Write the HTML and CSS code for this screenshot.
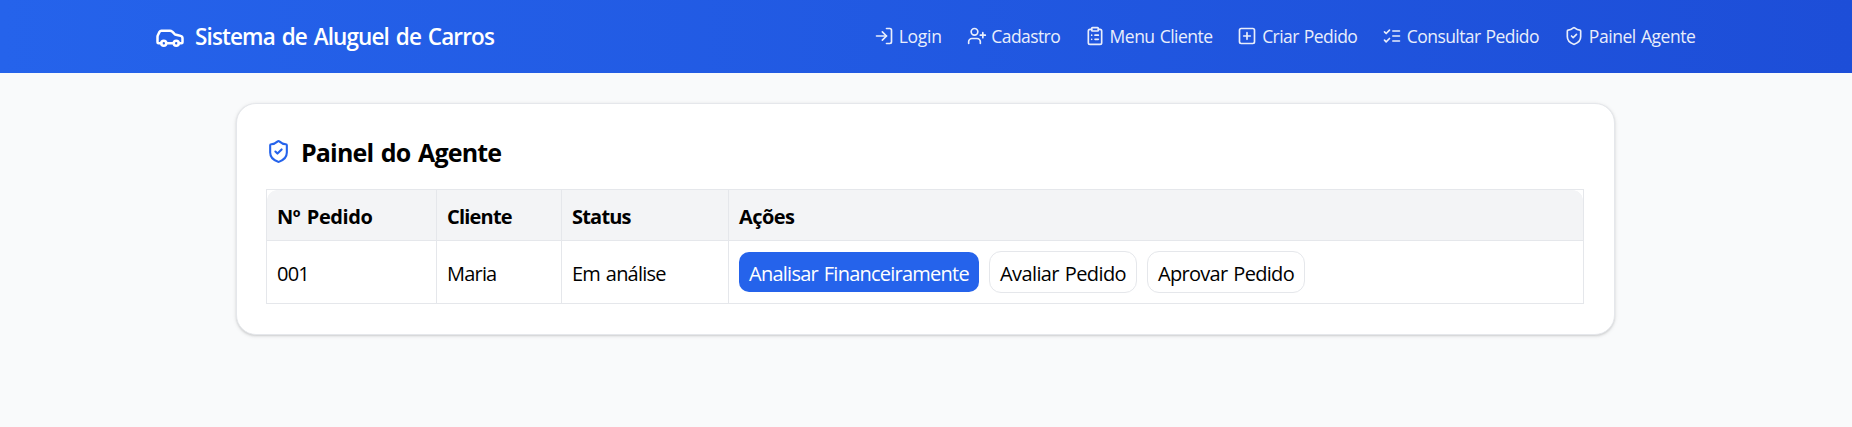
FILE: index.html
```html
<!DOCTYPE html>
<html lang="pt-BR">
<head>
<meta charset="utf-8">
<title>Sistema de Aluguel de Carros</title>
<link rel="stylesheet" href="styles.css">
</head>
<body>
<svg width="0" height="0" class="defs">
  <symbol id="shield" viewBox="0 0 24 24"><path d="M20 13c0 5-3.500 7.500-7.660 8.950a1 1 0 0 1-.67-.01C7.500 20.500 4 18 4 13V6a1 1 0 0 1 1-1c2 0 4.500-1.200 6.240-2.720a1.170 1.170 0 0 1 1.520 0C14.510 3.810 17 5 19 5a1 1 0 0 1 1 1z"/><path d="m9 12 2 2 4-4"/></symbol>
</svg>
<header class="topbar">
  <div class="brand">
    <svg class="icon icon-car" viewBox="0 0 24 24"><path d="M19 17h2c.6 0 1-.4 1-1v-3c0-.9-.7-1.700-1.500-1.900C18.700 10.600 16 10 16 10s-1.300-1.400-2.200-2.300c-.5-.4-1.100-.7-1.800-.7H5c-.6 0-1.100.4-1.400.9l-1.400 2.900A3.700 3.700 0 0 0 2 12v4c0 .6.4 1 1 1h2"/><circle cx="7" cy="17" r="2"/><path d="M9 17h6"/><circle cx="17" cy="17" r="2"/></svg>
    <span class="brand-name">Sistema de Aluguel de Carros</span>
  </div>
  <nav class="nav">
    <a class="link login"><svg class="icon" viewBox="0 0 24 24"><path d="M15 3h4a2 2 0 0 1 2 2v14a2 2 0 0 1-2 2h-4"/><path d="m10 17 5-5-5-5"/><path d="M15 12H3"/></svg><span>Login</span></a>
    <a class="link cadastro"><svg class="icon" viewBox="0 0 24 24"><path d="M16 21v-2a4 4 0 0 0-4-4H6a4 4 0 0 0-4 4v2"/><circle cx="9" cy="7" r="4"/><path d="M19 8v6M22 11h-6"/></svg><span>Cadastro</span></a>
    <a class="link menu"><svg class="icon" viewBox="0 0 24 24"><rect x="8" y="2" width="8" height="4" rx="1"/><path d="M16 4h2a2 2 0 0 1 2 2v14a2 2 0 0 1-2 2H6a2 2 0 0 1-2-2V6a2 2 0 0 1 2-2h2"/><path d="M12 11h4M12 16h4M8 11h.01M8 16h.01"/></svg><span>Menu Cliente</span></a>
    <a class="link criar"><svg class="icon" viewBox="0 0 24 24"><rect x="3" y="3" width="18" height="18" rx="2"/><path d="M8 12h8M12 8v8"/></svg><span>Criar Pedido</span></a>
    <a class="link consultar"><svg class="icon" viewBox="0 0 24 24"><path d="m3 17 2 2 4-4"/><path d="m3 7 2 2 4-4"/><path d="M13 6h8M13 12h8M13 18h8"/></svg><span>Consultar Pedido</span></a>
    <a class="link painel"><svg class="icon"><use href="#shield"/></svg><span>Painel Agente</span></a>
  </nav>
</header>
<main class="card">
  <h1 class="heading"><svg class="icon icon-heading"><use href="#shield"/></svg><span>Painel do Agente</span></h1>
  <table class="orders">
    <colgroup><col class="c-num"><col class="c-client"><col class="c-status"><col></colgroup>
    <thead>
      <tr><th class="h-num">Nº Pedido</th><th class="h-client">Cliente</th><th class="h-status">Status</th><th class="h-actions">Ações</th></tr>
    </thead>
    <tbody>
      <tr><td>001</td><td>Maria</td><td>Em análise</td><td class="cell-actions"><div class="actions"><button class="btn primary">Analisar Financeiramente</button><button class="btn evaluate">Avaliar Pedido</button><button class="btn approve">Aprovar Pedido</button></div></td></tr>
    </tbody>
  </table>
</main>
</body>
</html>
```
FILE: styles.css
```css
* { box-sizing: border-box; }
body {
  margin: 0;
  min-height: 427px;
  background: #f9fafb;
  color: #000;
  font: 20px/30px "Open Sans", "Noto Sans", sans-serif;
}
.defs { display: block; }
.icon {
  width: 20px;
  height: 20px;
  flex: none;
  fill: none;
  stroke: currentColor;
  stroke-width: 2;
  stroke-linecap: round;
  stroke-linejoin: round;
}
.topbar {
  display: flex;
  align-items: center;
  justify-content: space-between;
  height: 73px;
  padding: 0 156.5px 0 155px;
  background: linear-gradient(to right, #2563eb, #1d4ed8);
  color: #fff;
}
.brand { display: flex; align-items: center; gap: 10px; white-space: nowrap; }
.icon-car { width: 30px; height: 30px; }
.brand-name { font-size: 22.5px; font-weight: 600; letter-spacing: -0.87px; word-spacing: 1.8px; }
.nav { display: flex; gap: 25px; font-size: 17.5px; line-height: 25px; }
.nav .icon { margin-top: -1px; }
.link { display: flex; align-items: center; gap: 4.7px; white-space: nowrap; opacity: 0.9; }
.link span { display: block; word-spacing: 1px; }
.login span { width: 42.9px; letter-spacing: -0.25px; }
.cadastro span { width: 68.6px; letter-spacing: -0.57px; }
.menu span { width: 102.9px; letter-spacing: -0.5px; }
.criar span { width: 95px; letter-spacing: -0.55px; }
.consultar span { width: 132.3px; letter-spacing: -0.57px; }
.painel span { width: 106.7px; letter-spacing: -0.44px; }

.card {
  width: 1379px;
  height: 232px;
  margin: 30px 0 0 236px;
  padding: 29px;
  background: #fff;
  border: 1px solid #e5e7eb;
  border-radius: 20px;
  box-shadow: 0 1px 4px rgba(0, 0, 0, 0.1), 0 1px 2px rgba(0, 0, 0, 0.1);
}
.heading {
  display: flex;
  align-items: center;
  gap: 10px;
  height: 38px;
  margin: 0 0 18px;
  font-size: 25px;
  line-height: 38px;
  font-weight: 700;
  letter-spacing: -0.85px;
  word-spacing: 2px;
}
.icon-heading { width: 25px; height: 25px; margin-top: -2px; color: #2563eb; }
.orders {
  width: 1318px;
  table-layout: fixed;
  border-collapse: collapse;
}
.c-num { width: 170px; }
.c-client { width: 125px; }
.c-status { width: 167px; }
.orders th, .orders td {
  padding: 12px 10px 8px;
  border: 1px solid #e5e7eb;
  text-align: left;
  letter-spacing: -0.8px;
  word-spacing: 1.4px;
}
.orders th { height: 51px; font-weight: 700; background: #f3f4f6; letter-spacing: -0.55px; }
.orders .h-num { letter-spacing: -0.45px; word-spacing: 2px; background: radial-gradient(circle at 10px 10px, #f3f4f6 9.5px, #fff 10px) 0 0 / 10px 10px no-repeat, linear-gradient(#f3f4f6, #f3f4f6) 10px 0 no-repeat, linear-gradient(#f3f4f6, #f3f4f6) 0 10px no-repeat; }
.orders .h-client, .orders .h-status { letter-spacing: -0.8px; }
.orders .h-actions { background: radial-gradient(circle at 0 10px, #f3f4f6 9.5px, #fff 10px) 100% 0 / 10px 10px no-repeat, #f3f4f6; }
.orders td { height: 63px; padding: 13px 10px 9px; }
.orders .cell-actions { padding: 10px; }
.actions { display: flex; align-items: center; gap: 10px; }
.btn {
  height: 42px;
  padding: 3px 0 0;
  border: 1px solid #e5e7eb;
  border-radius: 12px;
  background: #fff;
  color: #000;
  font: inherit;
  word-spacing: 1.4px;
  white-space: nowrap;
}
.primary { width: 240px; height: 40px; border: 0; border-radius: 10px; background: #2563eb; color: #fff; letter-spacing: -0.76px; }
.evaluate { width: 148px; letter-spacing: -0.62px; }
.approve { width: 158px; letter-spacing: -0.7px; }
```
